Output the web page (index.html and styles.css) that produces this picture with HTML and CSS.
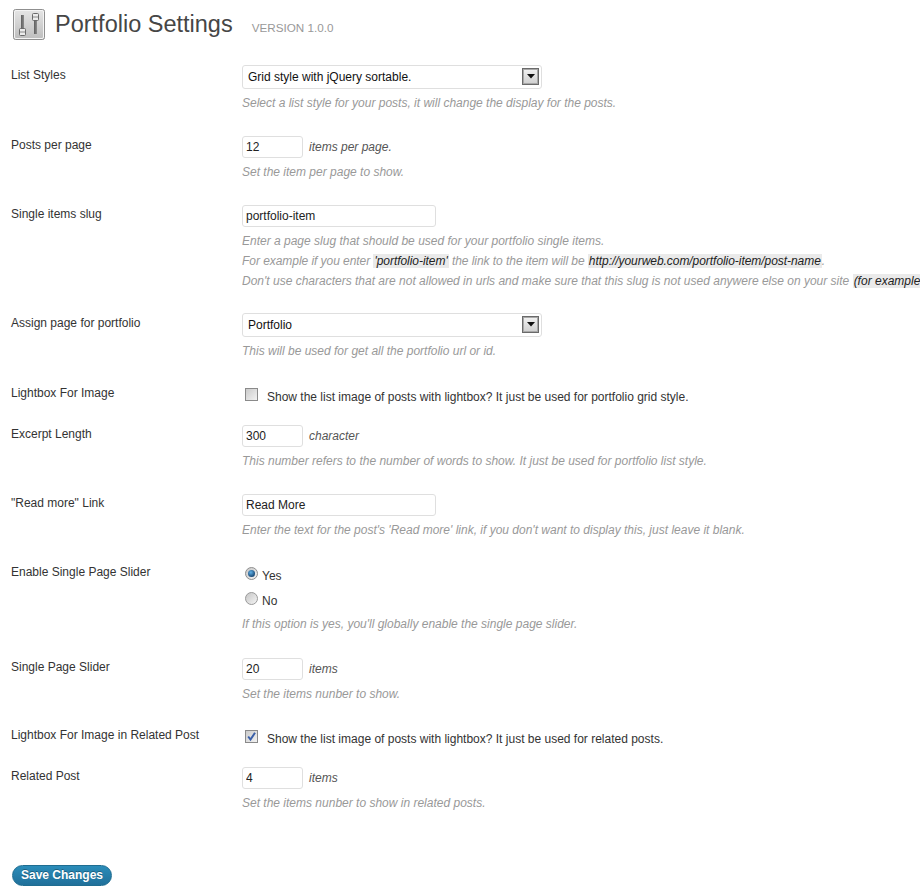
FILE: index.html
```html
<!DOCTYPE html>
<html lang="en">
<head>
<meta charset="utf-8">
<title>Portfolio Settings</title>
<link rel="stylesheet" href="styles.css">
</head>
<body>
<div class="page">
  <header class="head">
    <svg class="head-icon" width="33" height="32" viewBox="0 0 33 32">
      <defs><linearGradient id="ig" x1="0" y1="0" x2="0" y2="1"><stop offset="0" stop-color="#e6e6e6"/><stop offset="1" stop-color="#bdbdbd"/></linearGradient>
      <linearGradient id="it" x1="0" y1="0" x2="1" y2="0"><stop offset="0" stop-color="#5e5e5e"/><stop offset="1" stop-color="#8c8c8c"/></linearGradient></defs>
      <rect x="0.5" y="0.5" width="31" height="30" rx="2" fill="url(#ig)" stroke="#8f8f8f"/>
      <rect x="1.500" y="1.500" width="29" height="28" rx="1.500" fill="none" stroke="#f4f4f4"/>
      <rect x="8" y="6" width="3" height="14" fill="url(#it)"/>
      <rect x="6.500" y="19.500" width="6" height="7" rx="1" fill="#ececec" stroke="#6a6a6a"/>
      <path d="M7 23h5" stroke="#8a8a8a"/>
      <rect x="21" y="10" width="3" height="15" fill="url(#it)"/>
      <rect x="19.500" y="4.500" width="6" height="7" rx="1" fill="#ececec" stroke="#6a6a6a"/>
      <path d="M20 8h5" stroke="#8a8a8a"/>
    </svg>
    <h1 class="title">Portfolio Settings</h1>
    <span class="version">VERSION 1.0.0</span>
  </header>

  <form class="form">
    <div class="row">
      <div class="label">List Styles</div>
      <div class="cell">
        <div class="select"><span class="select-text">Grid style with jQuery sortable.</span>
          <span class="arrow"><svg width="8" height="5" viewBox="0 0 8 5"><path d="M0 0h8L4 4.500z" fill="#111"/></svg></span></div>
        <p class="desc">Select a list style for your posts, it will change the display for the posts.</p>
      </div>
    </div>
    <div class="row">
      <div class="label">Posts per page</div>
      <div class="cell">
        <div class="line"><input class="input short" value="12"><em class="unit">items per page.</em></div>
        <p class="desc">Set the item per page to show.</p>
      </div>
    </div>
    <div class="row">
      <div class="label">Single items slug</div>
      <div class="cell">
        <input class="input medium" value="portfolio-item">
        <p class="desc">Enter a page slug that should be used for your portfolio single items.</p>
        <p class="desc tight squeeze">For example if you enter <code class="hl">'portfolio-item'</code> the link to the item will be <code class="hl">http://yourweb.com/portfolio-item/post-name</code>.</p>
        <p class="desc tight">Don't use characters that are not allowed in urls and make sure that this slug is not used anywere else on your site <code class="hl">(for example</code></p>
      </div>
    </div>
    <div class="row">
      <div class="label">Assign page for portfolio</div>
      <div class="cell">
        <div class="select"><span class="select-text">Portfolio</span>
          <span class="arrow"><svg width="8" height="5" viewBox="0 0 8 5"><path d="M0 0h8L4 4.500z" fill="#111"/></svg></span></div>
        <p class="desc">This will be used for get all the portfolio url or id.</p>
      </div>
    </div>
    <div class="row check-row">
      <div class="label">Lightbox For Image</div>
      <div class="cell check-cell">
        <svg class="box" width="13" height="13" viewBox="0 0 13 13"><defs><linearGradient id="cb" x1="0" y1="0" x2="1" y2="1"><stop offset="0" stop-color="#c9c9c9"/><stop offset="1" stop-color="#f4f4f4"/></linearGradient></defs><rect x="0.5" y="0.5" width="12" height="12" fill="url(#cb)" stroke="#8a8a8a"/></svg>
        <span class="check-text">Show the list image of posts with lightbox? It just be used for portfolio grid style.</span>
      </div>
    </div>
    <div class="row">
      <div class="label">Excerpt Length</div>
      <div class="cell">
        <div class="line"><input class="input short" value="300"><em class="unit">character</em></div>
        <p class="desc">This number refers to the number of words to show. It just be used for portfolio list style.</p>
      </div>
    </div>
    <div class="row">
      <div class="label">"Read more" Link</div>
      <div class="cell">
        <input class="input medium" value="Read More">
        <p class="desc">Enter the text for the post's 'Read more' link, if you don't want to display this, just leave it blank.</p>
      </div>
    </div>
    <div class="row">
      <div class="label">Enable Single Page Slider</div>
      <div class="cell">
        <div class="radio-group">
          <div class="radio-line">
            <svg class="radio" width="13" height="13" viewBox="0 0 13 13"><defs><linearGradient id="ra" x1="0" y1="0" x2="1" y2="1"><stop offset="0" stop-color="#c4c4c4"/><stop offset="1" stop-color="#f6f6f6"/></linearGradient><radialGradient id="rd" cx="0.4" cy="0.35" r="0.7"><stop offset="0" stop-color="#5fb0e6"/><stop offset="1" stop-color="#123f6b"/></radialGradient></defs><circle cx="6.500" cy="6.500" r="6" fill="url(#ra)" stroke="#8f8f8f"/><circle cx="6.500" cy="6.500" r="3.500" fill="url(#rd)"/></svg>
            <span>Yes</span>
          </div>
          <div class="radio-line">
            <svg class="radio" width="13" height="13" viewBox="0 0 13 13"><circle cx="6.500" cy="6.500" r="6" fill="url(#ra)" stroke="#9a9a9a"/></svg>
            <span>No</span>
          </div>
        </div>
        <p class="desc radio-desc">If this option is yes, you'll globally enable the single page slider.</p>
      </div>
    </div>
    <div class="row compact">
      <div class="label">Single Page Slider</div>
      <div class="cell">
        <div class="line"><input class="input short" value="20"><em class="unit">items</em></div>
        <p class="desc">Set the items nunber to show.</p>
      </div>
    </div>
    <div class="row check-row">
      <div class="label">Lightbox For Image in Related Post</div>
      <div class="cell check-cell">
        <svg class="box" width="13" height="13" viewBox="0 0 13 13"><defs><linearGradient id="cc" x1="0" y1="0" x2="1" y2="1"><stop offset="0" stop-color="#c9c9c9"/><stop offset="1" stop-color="#f4f4f4"/></linearGradient></defs><rect x="0.5" y="0.5" width="12" height="12" fill="url(#cc)" stroke="#8a8a8a"/><path d="M3.200 6.500l2.300 3L10 2.800" fill="none" stroke="#3a5fa8" stroke-width="2"/></svg>
        <span class="check-text">Show the list image of posts with lightbox? It just be used for related posts.</span>
      </div>
    </div>
    <div class="row">
      <div class="label">Related Post</div>
      <div class="cell">
        <div class="line"><input class="input short" value="4"><em class="unit">items</em></div>
        <p class="desc">Set the items nunber to show in related posts.</p>
      </div>
    </div>
    <button class="save" type="button">Save Changes</button>
  </form>
</div>
</body>
</html>
```
FILE: styles.css
```css
* { box-sizing: border-box; }
html, body { margin: 0; padding: 0; background: #fff; }
body { font: 12px/20px "Liberation Sans", Arial, sans-serif; color: #333; }
.page { width: 920px; height: 896px; overflow: hidden; }

.head { display: flex; align-items: flex-start; height: 65px; padding: 9px 0 0 13px; }
.head-icon { flex: none; display: block; }
.title { margin: 0 0 0 9px; font: 400 23.5px/30px "Liberation Sans", Arial, sans-serif; color: #464646; }
.version { margin: 11px 0 0 19px; font-size: 11.7px; line-height: 16px; color: #999; }

.form { display: block; }
.row { display: grid; grid-template-columns: 242px 678px; padding-bottom: 22px; }
.row.compact { padding-bottom: 21px; }
.row.check-row { padding-bottom: 16px; }
.label { padding-left: 11px; color: #333; }
.cell { min-width: 0; white-space: nowrap; overflow: hidden; }

.select { position: relative; display: flex; align-items: center; width: 300px; height: 24px; padding-left: 5px; background: #fff; border: 1px solid #dfdfdf; border-radius: 3px; color: #111; }
.arrow { position: absolute; right: 2px; top: 2px; display: flex; align-items: center; justify-content: center; width: 17px; height: 17px; border: 1px solid #6a6a6a; box-shadow: inset 0 0 0 1px #a8a8a8; background: linear-gradient(#f2f2f2, #cfcfcf); }

.line { display: flex; align-items: center; margin-top: 1px; }
.input { display: block; height: 22px; margin: 1px 0 0; padding: 0 3px; font: 12px "Liberation Sans", Arial, sans-serif; color: #222; background: #fff; border: 1px solid #dfdfdf; border-radius: 3px; outline: 0; }
.line .input { margin-top: 0; }
.short { width: 61px; }
.medium { width: 194px; }
.unit { margin-left: 6px; color: #555; font-style: italic; }

.desc { margin: 4px 0 0; color: #999; font-style: italic; }
.desc.tight { margin-top: 0; }
.desc.squeeze { letter-spacing: -0.05px; }
.hl { padding: 0 1px; font: italic 12px "Liberation Sans", Arial, sans-serif; color: #222; background: #eaeaea; }

.check-cell { display: flex; align-items: flex-start; height: 25px; }
.box { flex: none; display: block; margin: 5px 0 0 3px; }
.check-text { margin: 4px 0 0 9px; color: #333; }

.radio-group { margin-top: 1px; }
.radio-line { display: flex; align-items: center; height: 25px; padding-left: 3px; color: #333; }
.radio { flex: none; display: block; margin: -5px 4px 0 0; }
.radio-desc { margin: 1px 0 1px; }

.save { display: block; width: 100px; height: 21px; margin: 30px 0 0 12px; padding: 0; font: 700 12px/19px "Liberation Sans", Arial, sans-serif; color: #fff; background: linear-gradient(#2b8cb9, #20709a); border: 1px solid #1f6d91; border-radius: 11px; text-shadow: 0 -1px 0 rgba(0,0,0,.3); }
```
